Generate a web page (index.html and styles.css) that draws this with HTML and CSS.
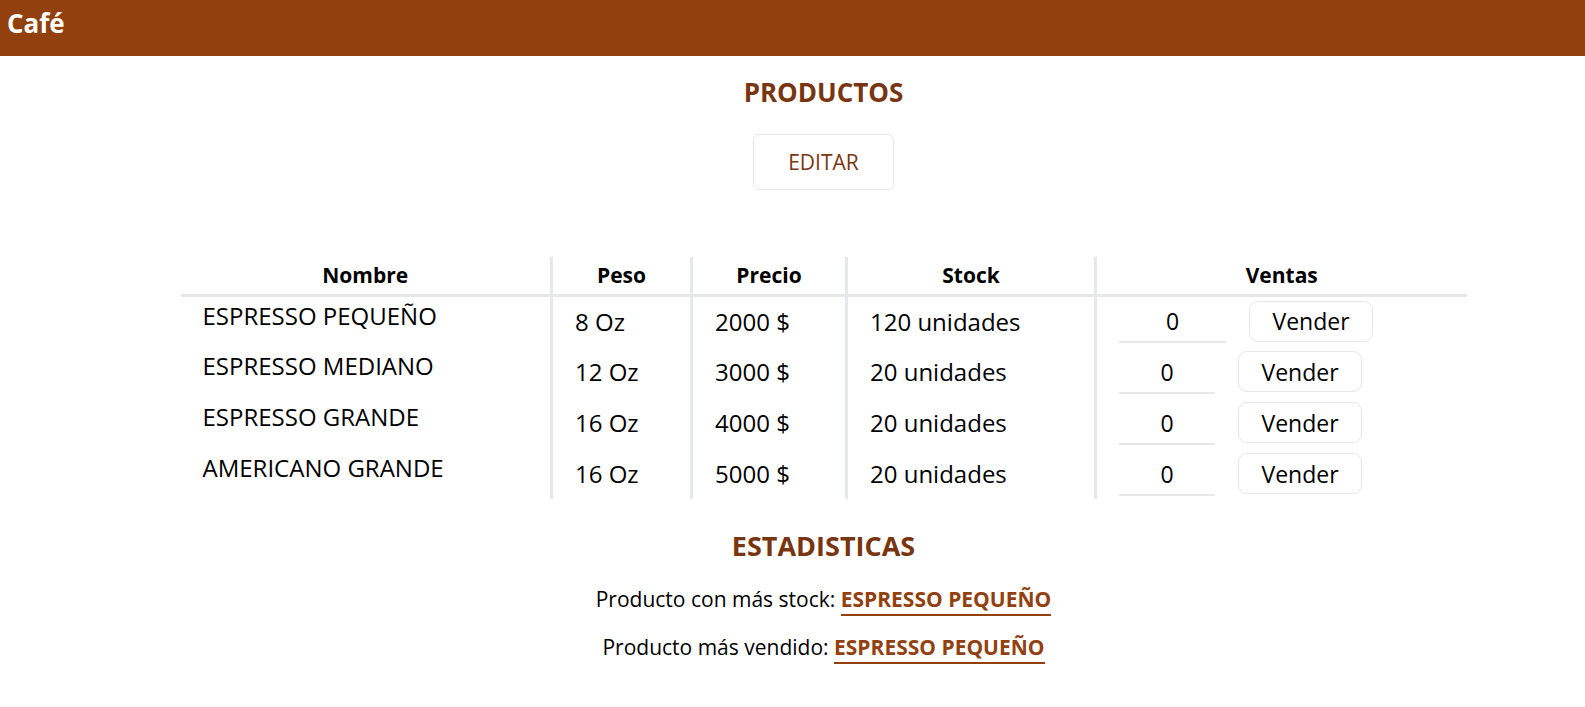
FILE: index.html
```html
<!DOCTYPE html>
<html lang="es">
<head>
<meta charset="utf-8">
<title>Café</title>
<link rel="stylesheet" href="styles.css">
</head>
<body>
<header class="topbar"><span class="brand">Café</span></header>
<main class="content">
  <h2 class="section-title">PRODUCTOS</h2>
  <div class="actions"><button class="btn-edit">EDITAR</button></div>
  <table class="products">
    <thead>
      <tr>
        <th class="c-name">Nombre</th>
        <th class="c-peso">Peso</th>
        <th class="c-precio">Precio</th>
        <th class="c-stock">Stock</th>
        <th class="c-ventas">Ventas</th>
      </tr>
    </thead>
    <tbody>
      <tr>
        <td class="name">ESPRESSO PEQUEÑO</td>
        <td>8 Oz</td>
        <td>2000 $</td>
        <td>120 unidades</td>
        <td><div class="sell"><input class="qty wide" value="0"><button class="btn-sell">Vender</button></div></td>
      </tr>
      <tr>
        <td class="name">ESPRESSO MEDIANO</td>
        <td>12 Oz</td>
        <td>3000 $</td>
        <td>20 unidades</td>
        <td><div class="sell"><input class="qty" value="0"><button class="btn-sell">Vender</button></div></td>
      </tr>
      <tr>
        <td class="name">ESPRESSO GRANDE</td>
        <td>16 Oz</td>
        <td>4000 $</td>
        <td>20 unidades</td>
        <td><div class="sell"><input class="qty" value="0"><button class="btn-sell">Vender</button></div></td>
      </tr>
      <tr>
        <td class="name">AMERICANO GRANDE</td>
        <td>16 Oz</td>
        <td>5000 $</td>
        <td>20 unidades</td>
        <td><div class="sell"><input class="qty" value="0"><button class="btn-sell">Vender</button></div></td>
      </tr>
    </tbody>
  </table>
  <h2 class="section-title stats-title">ESTADISTICAS</h2>
  <p class="stat">Producto con más stock: <span class="stat-value">ESPRESSO PEQUEÑO</span></p>
  <p class="stat">Producto más vendido: <span class="stat-value">ESPRESSO PEQUEÑO</span></p>
</main>
</body>
</html>
```

FILE: styles.css
```css
* { box-sizing: border-box; }
html, body { margin: 0; padding: 0; background: #fff; }
body {
  font-family: "Open Sans", "Noto Sans", "Liberation Sans", sans-serif;
  color: #000;
}
.topbar {
  height: 56px;
  background: #92400e;
  display: flex;
  align-items: center;
  padding: 0 0 10px 7px;
}
.brand {
  color: #fff;
  font-weight: 700;
  font-size: 26px;
}
.content {
  padding-left: 62px;
  display: flex;
  flex-direction: column;
  align-items: center;
}
.section-title {
  margin: 18px 0 0;
  font-size: 26px;
  font-weight: 700;
  color: #78350f;
  line-height: 36px;
}
.actions { margin-top: 24px; }
.btn-edit {
  width: 141px;
  height: 56px;
  background: #fff;
  border: 1px solid #e5e7eb;
  border-radius: 6px;
  color: #7c3511;
  font-family: inherit;
  font-size: 21px;
}
.products {
  margin-top: 67px;
  width: 1286px;
  border-collapse: collapse;
  font-size: 24px;
}
.products th {
  font-size: 21px;
  font-weight: 700;
  height: 38px;
  padding: 0;
  text-align: center;
  border-bottom: 3px solid #e5e7eb;
}
.c-name { width: 371px; }
.c-peso { width: 140px; }
.c-precio { width: 155px; }
.c-stock { width: 249px; }
.products th + th,
.products td + td { border-left: 3px solid #e5e7eb; }
.products td {
  height: 51px;
  padding: 0 22px;
  vertical-align: middle;
}
.products td.name { padding-bottom: 12px; }
.sell {
  display: flex;
  align-items: center;
  gap: 23px;
}
.qty {
  width: 96px;
  height: 42px;
  border: none;
  border-bottom: 2px solid #e5e7eb;
  text-align: center;
  font-family: inherit;
  font-size: 23px;
  padding: 0;
  margin-top: 2px;
  outline: none;
  background: transparent;
}
.qty.wide { width: 107px; }
.btn-sell {
  width: 124px;
  height: 41px;
  background: #fff;
  border: 1px solid #e5e7eb;
  border-radius: 9px;
  font-family: inherit;
  font-size: 23px;
  color: #000;
}
.stats-title { margin-top: 29px; font-size: 27px; }
.stat {
  margin: 20px 0 0;
  font-size: 21px;
  line-height: 30px;
}
.stat + .stat { margin-top: 16px; }
.stat-value {
  color: #92400e;
  font-weight: 700;
  display: inline-block;
  border-bottom: 2px solid #92400e;
}
```
